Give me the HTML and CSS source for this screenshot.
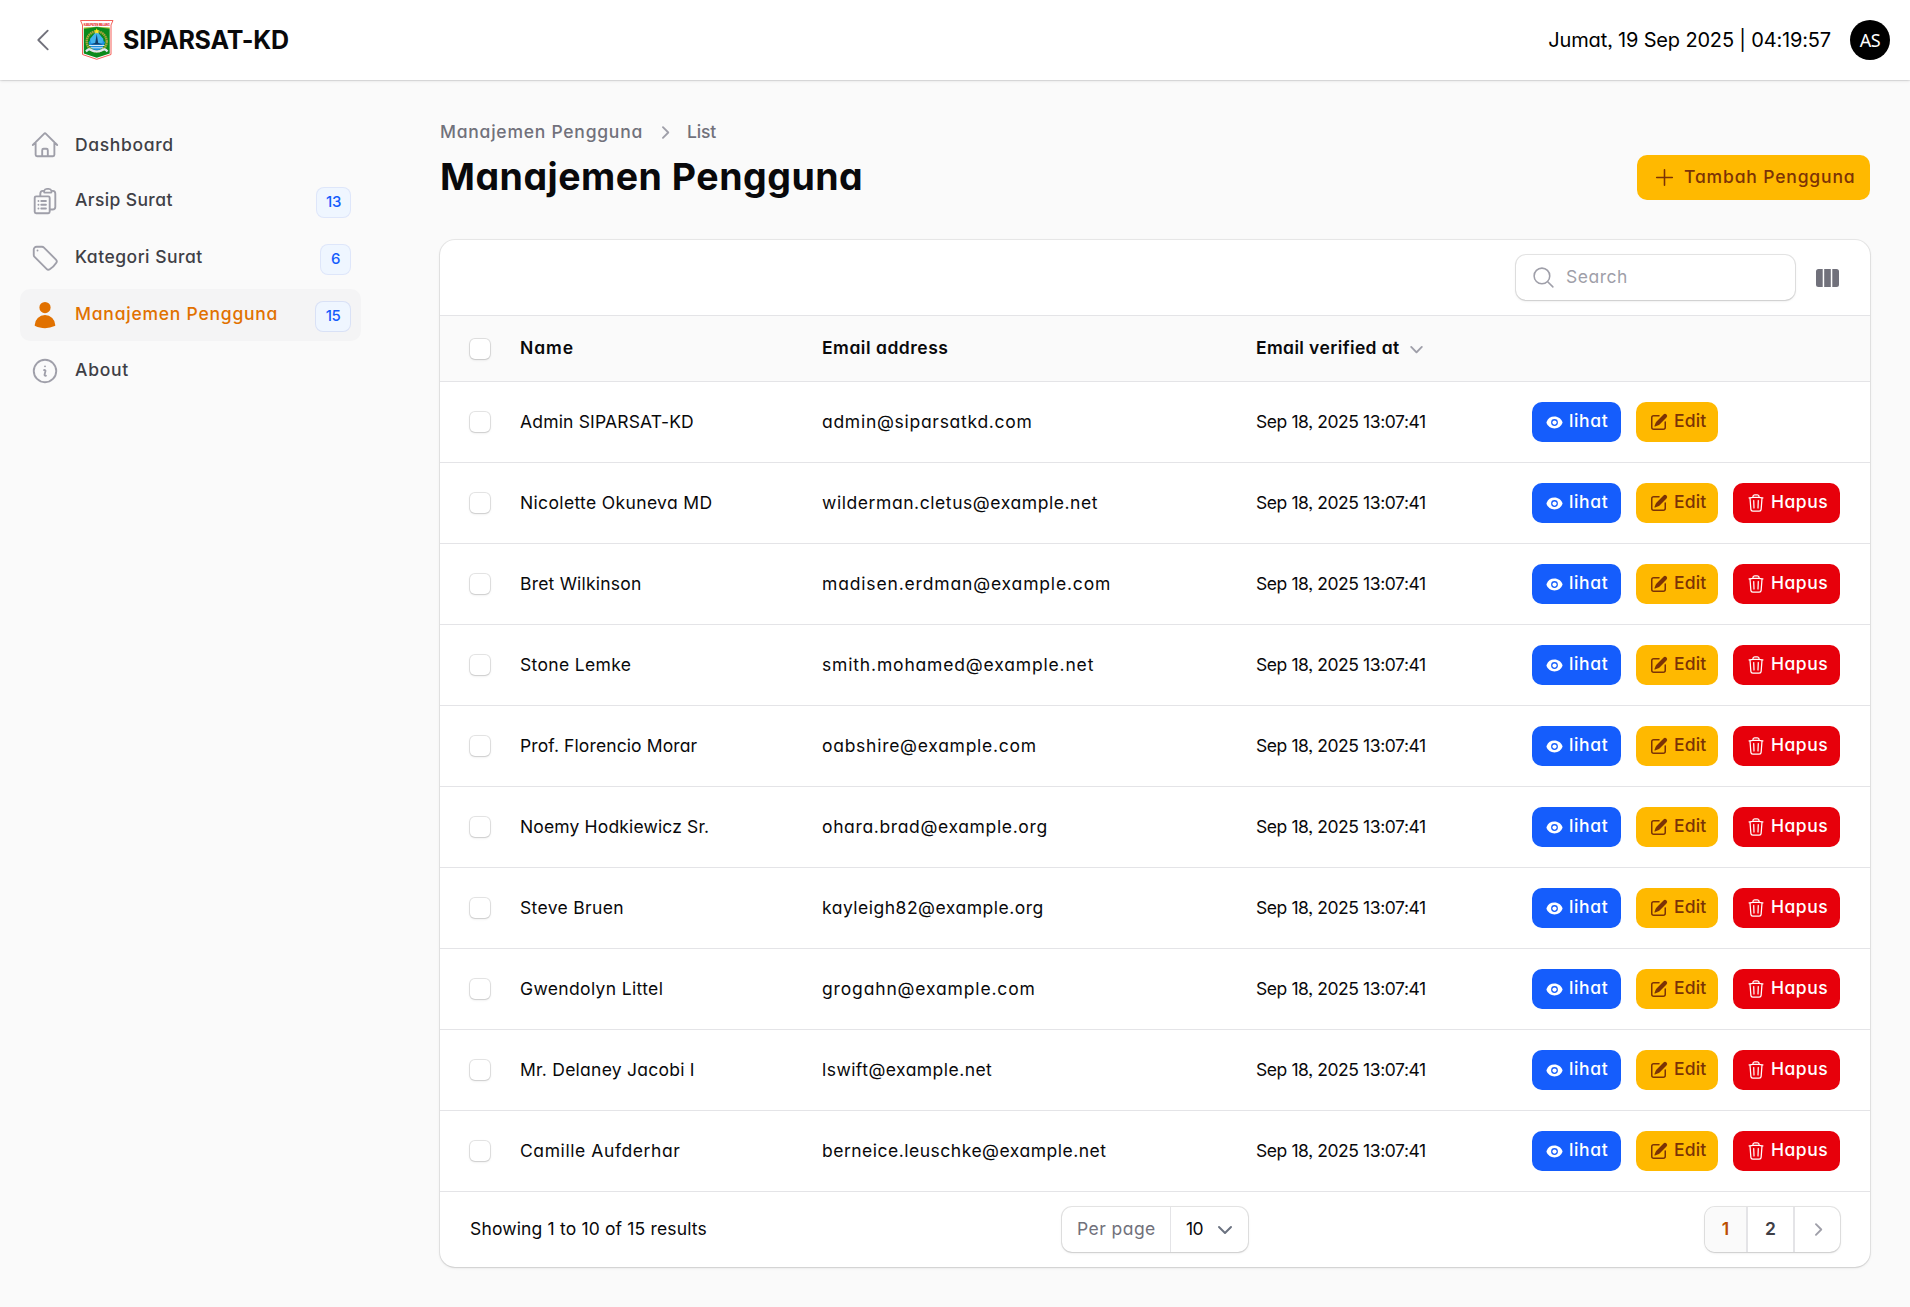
FILE: index.html
```
<!DOCTYPE html>
<html lang="id">
<head>
<meta charset="utf-8">
<title>Manajemen Pengguna - SIPARSAT-KD</title>
<link rel="stylesheet" href="styles.css">
</head>
<body>
<svg class="sprite" width="0" height="0" aria-hidden="true">
  <symbol id="eye" viewBox="0 0 20 20"><path d="M10 12.5a2.5 2.5 0 1 0 0-5 2.5 2.5 0 0 0 0 5Z"/><path fill-rule="evenodd" d="M.664 10.59a1.651 1.651 0 0 1 0-1.186A10.004 10.004 0 0 1 10 3c4.257 0 7.893 2.66 9.336 6.41.147.381.146.804 0 1.186A10.004 10.004 0 0 1 10 17c-4.257 0-7.893-2.66-9.336-6.41ZM14 10a4 4 0 1 1-8 0 4 4 0 0 1 8 0Z"/></symbol>
  <symbol id="pencil" viewBox="0 0 20 20"><path d="m5.433 13.917 1.262-3.155A4 4 0 0 1 7.58 9.42l6.92-6.918a2.121 2.121 0 0 1 3 3l-6.92 6.918c-.383.383-.84.685-1.343.886l-3.154 1.262a.5.5 0 0 1-.65-.65Z"/><path d="M3.5 5.75c0-.69.56-1.25 1.25-1.25H10A.75.75 0 0 0 10 3H4.75A2.75 2.75 0 0 0 2 5.75v9.5A2.75 2.75 0 0 0 4.75 18h9.5A2.75 2.75 0 0 0 17 15.25V10a.75.75 0 0 0-1.5 0v5.25c0 .69-.56 1.25-1.25 1.25h-9.5c-.69 0-1.25-.56-1.25-1.25v-9.5Z"/></symbol>
  <symbol id="trash" viewBox="0 0 24 24"><path fill="none" stroke="currentColor" stroke-width="1.5" stroke-linecap="round" stroke-linejoin="round" d="m14.74 9-.346 9m-4.788 0L9.26 9m9.968-3.21c.342.052.682.107 1.022.166m-1.022-.165L18.16 19.673a2.25 2.25 0 0 1-2.244 2.077H8.084a2.25 2.25 0 0 1-2.244-2.077L4.772 5.79m14.456 0a48.108 48.108 0 0 0-3.478-.397m-12 .562c.34-.059.68-.114 1.022-.165m0 0a48.11 48.11 0 0 1 3.478-.397m7.5 0v-.916c0-1.18-.91-2.164-2.09-2.201a51.964 51.964 0 0 0-3.32 0c-1.18.037-2.09 1.022-2.09 2.201v.916m7.5 0a48.667 48.667 0 0 0-7.5 0"/></symbol>
  <symbol id="chev-right" viewBox="0 0 20 20"><path fill-rule="evenodd" d="M8.22 5.22a.75.75 0 0 1 1.06 0l4.25 4.25a.75.75 0 0 1 0 1.06l-4.25 4.25a.75.75 0 0 1-1.06-1.06L11.94 10 8.22 6.28a.75.75 0 0 1 0-1.06Z"/></symbol>
  <symbol id="chev-down" viewBox="0 0 20 20"><path fill-rule="evenodd" d="M5.22 8.22a.75.75 0 0 1 1.06 0L10 11.94l3.72-3.72a.75.75 0 1 1 1.06 1.06l-4.25 4.25a.75.75 0 0 1-1.06 0L5.22 9.28a.75.75 0 0 1 0-1.06Z"/></symbol>
</svg>

<header class="topbar">
  <svg class="collapse line" viewBox="0 0 24 24"><path d="M15.75 19.5 8.25 12l7.5-7.5"/></svg>
  <svg class="crest" viewBox="0 0 34 40">
    <path d="M.5.5h32.500L31 5v29.500L16.700 39.300 2.500 34.500V5Z" fill="#fff" stroke="#f4605a"/>
    <text x="16.700" y="5.600" font-size="3.400" font-weight="800" text-anchor="middle" textLength="26" lengthAdjust="spacingAndGlyphs" fill="#e8211b">KABUPATEN MALANG</text>
    <path d="M3.800 7.800 16.700 6.800 29.700 7.800V33.500L16.700 37.700 3.800 33.500Z" fill="#0b8a1c"/>
    <path d="M4 7.500h26v1L16.700 7.600 4 8.500Z" fill="#f4e04a"/>
    <circle cx="16.700" cy="21.500" r="10" fill="none" stroke="#a9a43c" stroke-width="2.400" stroke-dasharray="1.600 .5"/>
    <path d="M16.700 11 25 22.500q-2 7-8.300 8Q10.500 29.500 8.500 22.500Z" fill="#1d8fe0"/>
    <path d="M10 19 16.700 11l6.700 8-1 4H11Z" fill="#42b4ee"/>
    <path d="m16.700 14 1.500 9 4.500 1.500h-12l4.500-1.500Z" fill="#123c66"/>
    <path d="M9 25.500h15.500M10.500 27.800h12.500" stroke="#e8f4fc" stroke-width=".9"/>
    <path d="M6 31.500q3-3.500 5-1.500 5.700 3 11.500 0 2-2 5 1.500" fill="none" stroke="#dfe5ee" stroke-width="2.200"/>
    <path d="m16.700 8.300.8 2 2 .1-1.500 1.400.5 2-1.800-1.100-1.800 1.100.5-2-1.500-1.400 2-.1Z" fill="#ffe626"/>
  </svg>
  <span class="brand">SIPARSAT-KD</span>
  <span class="clock">Jumat, 19 Sep 2025 | 04:19:57</span>
  <span class="avatar">AS</span>
</header>

<div class="layout">
  <nav class="sidebar">
    <a class="item"><svg class="line" viewBox="0 0 24 24"><path d="m2.250 12 8.954-8.955c.44-.439 1.152-.439 1.591 0L21.750 12M4.500 9.750v10.125c0 .621.504 1.125 1.125 1.125H9.750v-4.875c0-.621.504-1.125 1.125-1.125h2.250c.621 0 1.125.504 1.125 1.125V21h4.125c.621 0 1.125-.504 1.125-1.125V9.750M8.250 21h8.250"/></svg><span class="label l1">Dashboard</span></a>
    <a class="item tall"><svg class="line" viewBox="0 0 24 24"><path d="M9 12h3.75M9 15h3.75M9 18h3.75m3 .75H18a2.25 2.25 0 0 0 2.25-2.25V6.108c0-1.135-.845-2.098-1.976-2.192a48.424 48.424 0 0 0-1.123-.08m-5.801 0c-.065.21-.1.433-.1.664 0 .414.336.75.75.75h4.5a.75.75 0 0 0 .75-.75 2.25 2.25 0 0 0-.1-.664m-5.8 0A2.251 2.251 0 0 1 13.5 2.25H15c1.012 0 1.867.668 2.15 1.586m-5.8 0c-.376.023-.75.05-1.124.08C9.095 4.01 8.25 4.973 8.25 6.108V8.25m0 0H4.875c-.621 0-1.125.504-1.125 1.125v11.25c0 .621.504 1.125 1.125 1.125h9.75c.621 0 1.125-.504 1.125-1.125V9.375c0-.621-.504-1.125-1.125-1.125H8.25ZM6.75 12h.008v.008H6.75V12Zm0 3h.008v.008H6.75V15Zm0 3h.008v.008H6.75V18Z"/></svg><span class="label l2">Arsip Surat</span><span class="badge">13</span></a>
    <a class="item tall"><svg class="line" viewBox="0 0 24 24"><path d="M9.568 3H5.25A2.25 2.25 0 0 0 3 5.25v4.318c0 .597.237 1.17.659 1.591l9.581 9.581c.699.699 1.78.872 2.607.33a18.095 18.095 0 0 0 5.223-5.223c.542-.827.369-1.908-.33-2.607L11.16 3.66A2.25 2.25 0 0 0 9.568 3Z"/><path d="M6 6h.008v.008H6V6Z"/></svg><span class="label l3">Kategori Surat</span><span class="badge one">6</span></a>
    <a class="item tall active"><svg viewBox="0 0 24 24"><path fill-rule="evenodd" d="M7.5 6a4.5 4.5 0 1 1 9 0 4.5 4.5 0 0 1-9 0ZM3.751 20.105a8.25 8.25 0 0 1 16.498 0 .75.75 0 0 1-.437.695A18.683 18.683 0 0 1 12 22.5c-2.786 0-5.433-.608-7.812-1.7a.75.75 0 0 1-.437-.695Z"/></svg><span class="label l4">Manajemen Pengguna</span><span class="badge wide">15</span></a>
    <a class="item"><svg class="line" viewBox="0 0 24 24"><path d="m11.25 11.25.041-.02a.75.75 0 0 1 1.063.852l-.708 2.836a.75.75 0 0 0 1.063.853l.041-.021M21 12a9 9 0 1 1-18 0 9 9 0 0 1 18 0Zm-9-3.75h.008v.008H12V8.25Z"/></svg><span class="label l5">About</span></a>
  </nav>

  <main>
    <div class="crumbs"><span class="c1">Manajemen Pengguna</span><svg viewBox="0 0 20 20"><use href="#chev-right"/></svg><span class="c2">List</span></div>
    <div class="heading">
      <h1>Manajemen Pengguna</h1>
      <button class="create"><svg class="line" viewBox="0 0 24 24"><path d="M12 4.500v15m7.500-7.500h-15"/></svg><span>Tambah Pengguna</span></button>
    </div>

    <section class="card">
      <div class="toolbar">
        <div class="search"><svg class="line" viewBox="0 0 24 24"><path d="m21 21-5.197-5.197m0 0A7.500 7.500 0 1 0 5.196 5.196a7.500 7.500 0 0 0 10.607 10.607Z"/></svg><span>Search</span></div>
        <svg class="cols" viewBox="0 0 23 18"><path d="M2.500 0H6.700V18H2.500A2.500 2.500 0 0 1 0 15.500v-13A2.500 2.500 0 0 1 2.500 0ZM8.200 0h6.600v18H8.200ZM16.300 0h4.200A2.500 2.500 0 0 1 23 2.500v13a2.500 2.500 0 0 1-2.500 2.500h-4.200Z"/></svg>
      </div>
      <div class="row thead"><i class="check"></i><span class="h1c">Name</span><span class="h2c">Email address</span><span class="h3c">Email verified at<svg viewBox="0 0 20 20"><use href="#chev-down"/></svg></span></div>
      <div class="rows">
        <div class="row"><i class="check"></i><span class="name">Admin SIPARSAT-KD</span><span class="mail">admin@siparsatkd.com</span><span class="date">Sep 18, 2025 13:07:41</span><div class="actions"><button class="btn view"><svg><use href="#eye"/></svg><span>lihat</span></button><button class="btn edit"><svg><use href="#pencil"/></svg><span>Edit</span></button></div></div>
        <div class="row"><i class="check"></i><span class="name">Nicolette Okuneva MD</span><span class="mail">wilderman.cletus@example.net</span><span class="date">Sep 18, 2025 13:07:41</span><div class="actions"><button class="btn view"><svg><use href="#eye"/></svg><span>lihat</span></button><button class="btn edit"><svg><use href="#pencil"/></svg><span>Edit</span></button><button class="btn del"><svg><use href="#trash"/></svg><span>Hapus</span></button></div></div>
        <div class="row"><i class="check"></i><span class="name">Bret Wilkinson</span><span class="mail">madisen.erdman@example.com</span><span class="date">Sep 18, 2025 13:07:41</span><div class="actions"><button class="btn view"><svg><use href="#eye"/></svg><span>lihat</span></button><button class="btn edit"><svg><use href="#pencil"/></svg><span>Edit</span></button><button class="btn del"><svg><use href="#trash"/></svg><span>Hapus</span></button></div></div>
        <div class="row"><i class="check"></i><span class="name">Stone Lemke</span><span class="mail">smith.mohamed@example.net</span><span class="date">Sep 18, 2025 13:07:41</span><div class="actions"><button class="btn view"><svg><use href="#eye"/></svg><span>lihat</span></button><button class="btn edit"><svg><use href="#pencil"/></svg><span>Edit</span></button><button class="btn del"><svg><use href="#trash"/></svg><span>Hapus</span></button></div></div>
        <div class="row"><i class="check"></i><span class="name">Prof. Florencio Morar</span><span class="mail">oabshire@example.com</span><span class="date">Sep 18, 2025 13:07:41</span><div class="actions"><button class="btn view"><svg><use href="#eye"/></svg><span>lihat</span></button><button class="btn edit"><svg><use href="#pencil"/></svg><span>Edit</span></button><button class="btn del"><svg><use href="#trash"/></svg><span>Hapus</span></button></div></div>
        <div class="row"><i class="check"></i><span class="name">Noemy Hodkiewicz Sr.</span><span class="mail">ohara.brad@example.org</span><span class="date">Sep 18, 2025 13:07:41</span><div class="actions"><button class="btn view"><svg><use href="#eye"/></svg><span>lihat</span></button><button class="btn edit"><svg><use href="#pencil"/></svg><span>Edit</span></button><button class="btn del"><svg><use href="#trash"/></svg><span>Hapus</span></button></div></div>
        <div class="row"><i class="check"></i><span class="name">Steve Bruen</span><span class="mail">kayleigh82@example.org</span><span class="date">Sep 18, 2025 13:07:41</span><div class="actions"><button class="btn view"><svg><use href="#eye"/></svg><span>lihat</span></button><button class="btn edit"><svg><use href="#pencil"/></svg><span>Edit</span></button><button class="btn del"><svg><use href="#trash"/></svg><span>Hapus</span></button></div></div>
        <div class="row"><i class="check"></i><span class="name">Gwendolyn Littel</span><span class="mail">grogahn@example.com</span><span class="date">Sep 18, 2025 13:07:41</span><div class="actions"><button class="btn view"><svg><use href="#eye"/></svg><span>lihat</span></button><button class="btn edit"><svg><use href="#pencil"/></svg><span>Edit</span></button><button class="btn del"><svg><use href="#trash"/></svg><span>Hapus</span></button></div></div>
        <div class="row"><i class="check"></i><span class="name">Mr. Delaney Jacobi I</span><span class="mail">lswift@example.net</span><span class="date">Sep 18, 2025 13:07:41</span><div class="actions"><button class="btn view"><svg><use href="#eye"/></svg><span>lihat</span></button><button class="btn edit"><svg><use href="#pencil"/></svg><span>Edit</span></button><button class="btn del"><svg><use href="#trash"/></svg><span>Hapus</span></button></div></div>
        <div class="row"><i class="check"></i><span class="name">Camille Aufderhar</span><span class="mail">berneice.leuschke@example.net</span><span class="date">Sep 18, 2025 13:07:41</span><div class="actions"><button class="btn view"><svg><use href="#eye"/></svg><span>lihat</span></button><button class="btn edit"><svg><use href="#pencil"/></svg><span>Edit</span></button><button class="btn del"><svg><use href="#trash"/></svg><span>Hapus</span></button></div></div>
      </div>
      <div class="footer">
        <span class="showing">Showing 1 to 10 of 15 results</span>
        <div class="perpage"><span class="pp">Per page</span><span class="sel"><span>10</span><svg viewBox="0 0 20 20"><path d="m6 8 4 4 4-4"/></svg></span></div>
        <div class="pages"><span class="current">1</span><span class="second">2</span><span class="next"><svg viewBox="0 0 20 20"><use href="#chev-right"/></svg></span></div>
      </div>
    </section>
  </main>
</div>
</body>
</html>
```
FILE: styles.css
```
* { box-sizing: border-box; }

body {
  margin: 0;
  min-height: 1307px;
  background: #fafafa;
  color: #09090b;
  font-family: Inter, "Noto Sans", sans-serif;
  font-size: 17.5px;
  line-height: 25px;
  font-feature-settings: "cv11", "ss03";
  white-space: nowrap;
}

button {
  font: inherit;
  font-feature-settings: inherit;
  border: 0;
}

svg { display: block; flex: none; fill: currentColor; }
.sprite { position: absolute; }
.line {
  fill: none;
  stroke: currentColor;
  stroke-width: 1.5;
  stroke-linecap: round;
  stroke-linejoin: round;
}

/* Top bar */
.topbar {
  display: flex;
  align-items: center;
  height: 80px;
  padding: 0 20px 0 28px;
  background: #fff;
  box-shadow: 0 0 0 1px rgba(9, 9, 11, .05), 0 1px 3px rgba(0, 0, 0, .1), 0 1px 2px -1px rgba(0, 0, 0, .1);
}
.collapse { width: 30px; height: 30px; color: #71717b; }
.crest { width: 34px; height: 40px; margin-left: 22px; overflow: visible; line-height: 1; letter-spacing: 0; }
.brand {
  margin-left: 9px;
  font-size: 25px;
  font-weight: 700;
  letter-spacing: -.2px;
}
.clock {
  margin-left: auto;
  padding-top: 1px;
  font-size: 20px;
  letter-spacing: -.17px;
  color: #000;
}
.avatar {
  display: flex;
  align-items: center;
  justify-content: center;
  width: 40px;
  height: 40px;
  margin-left: 19px;
  border-radius: 50%;
  background: #000;
  color: #fff;
  font-family: "Noto Sans", sans-serif;
  font-size: 18px;
  letter-spacing: -.5px;
}

.layout { display: flex; }

/* Sidebar */
.sidebar {
  display: flex;
  flex-direction: column;
  gap: 5px;
  width: 400px;
  padding: 40px 39px 0 20px;
}
.item {
  display: flex;
  align-items: center;
  height: 50px;
  padding: 0 11px 0 10px;
  border-radius: 10px;
  color: #9f9fa9;
}
.item.tall { height: 52px; }
.item > svg { width: 30px; height: 30px; }
.label {
  flex: 1;
  margin-left: 15px;
  padding-bottom: 4px;
  font-weight: 450;
  color: #3f3f46;
}
.active { background: #f4f4f5; color: #e17100; }
.active .label { color: #e17100; }
.l1 { padding-bottom: 2px; letter-spacing: .65px; }
.l2 { letter-spacing: .38px; }
.l3 { letter-spacing: .5px; }
.l4 { letter-spacing: .77px; }
.l5 { letter-spacing: .72px; }
.badge {
  width: 33px;
  height: 29px;
  margin-top: 2px;
  border-radius: 7px;
  background: #eff6ff;
  box-shadow: 0 0 0 1px rgba(21, 93, 252, .12);
  color: #155dfc;
  font-size: 15px;
  font-weight: 500;
  line-height: 28px;
  letter-spacing: -.4px;
  text-align: center;
}
.badge.one { width: 29px; }
.badge.wide { width: 34px; }

/* Page header */
main { flex: 1; padding: 39px 40px 40px; }
.crumbs {
  display: flex;
  align-items: center;
  height: 25px;
  font-weight: 450;
  color: #71717b;
}
.crumbs svg { width: 25px; height: 25px; margin: 1px 10px 0 9px; color: #9f9fa9; }
.c1 { letter-spacing: .76px; }
.c2 { letter-spacing: -.2px; }
.heading {
  display: flex;
  justify-content: space-between;
  align-items: flex-end;
  height: 46px;
  margin-top: 10px;
}
h1 {
  margin: 0 0 1px 0;
  font-size: 37.5px;
  font-weight: 700;
  line-height: 45px;
  letter-spacing: .5px;
}
.create {
  display: flex;
  align-items: center;
  width: 233px;
  height: 45px;
  padding: 0 0 0 15px;
  border-radius: 10px;
  background: #ffb900;
  color: #7b3306;
  font-weight: 450;
  letter-spacing: .85px;
}
.create svg { width: 25px; height: 25px; margin-right: 7px; }
.create span { padding-bottom: 2px; }

/* Table card */
.card {
  height: 1027px;
  margin-top: 40px;
  border-radius: 15px;
  background: #fff;
  box-shadow: 0 0 0 1px rgba(9, 9, 11, .07), 0 1px 3px rgba(0, 0, 0, .1), 0 1px 2px -1px rgba(0, 0, 0, .1);
}
.toolbar {
  display: flex;
  align-items: center;
  justify-content: flex-end;
  height: 75px;
  padding-right: 31px;
}
.search {
  display: flex;
  align-items: center;
  width: 279px;
  height: 45px;
  padding-left: 15px;
  border-radius: 10px;
  box-shadow: 0 0 0 1px rgba(9, 9, 11, .1), 0 1px 3px rgba(0, 0, 0, .1), 0 1px 2px -1px rgba(0, 0, 0, .1);
  color: #9f9fa9;
}
.search svg { width: 25px; height: 25px; }
.search span { margin-left: 10px; padding-bottom: 2px; letter-spacing: .5px; }
.cols { width: 23px; height: 18px; margin-left: 21px; color: #71717b; }

.row {
  display: grid;
  grid-template-columns: 80px 302px 434px 276px auto;
  align-items: center;
  height: 81px;
  border-top: 1px solid #e4e4e7;
}
.row > span { padding-bottom: 2px; }
.thead {
  height: 66px;
  background: #fafafa;
  font-weight: 600;
}
.check {
  width: 20px;
  height: 20px;
  margin-left: 30px;
  border-radius: 5px;
  background: #fff;
  box-shadow: 0 0 0 1px rgba(9, 9, 11, .1), 0 1px 3px rgba(0, 0, 0, .1), 0 1px 2px -1px rgba(0, 0, 0, .1);
}
.h1c { letter-spacing: .9px; }
.h2c { letter-spacing: .52px; }
.h3c { display: flex; align-items: center; letter-spacing: .38px; }
.h3c svg { width: 25px; height: 25px; margin: 2px 0 0 4px; color: #9f9fa9; }
.date { letter-spacing: -.42px; }

.row:nth-child(1) .name { letter-spacing: .17px; }
.row:nth-child(2) .name { letter-spacing: .35px; }
.row:nth-child(3) .name { letter-spacing: .21px; }
.row:nth-child(4) .name { letter-spacing: .33px; }
.row:nth-child(5) .name { letter-spacing: .11px; }
.row:nth-child(6) .name { letter-spacing: .15px; }
.row:nth-child(7) .name { letter-spacing: .34px; }
.row:nth-child(8) .name { letter-spacing: .35px; }
.row:nth-child(9) .name { letter-spacing: .25px; }
.row:nth-child(10) .name { letter-spacing: .58px; }
.row:nth-child(1) .mail { letter-spacing: .72px; }
.row:nth-child(2) .mail { letter-spacing: .57px; }
.row:nth-child(3) .mail { letter-spacing: .84px; }
.row:nth-child(4) .mail { letter-spacing: .83px; }
.row:nth-child(5) .mail { letter-spacing: .73px; }
.row:nth-child(6) .mail { letter-spacing: .64px; }
.row:nth-child(7) .mail { letter-spacing: .5px; }
.row:nth-child(8) .mail { letter-spacing: .85px; }
.row:nth-child(9) .mail { letter-spacing: .46px; }
.row:nth-child(10) .mail { letter-spacing: .5px; }

.actions { display: flex; gap: 15px; }
.btn {
  display: flex;
  align-items: center;
  height: 40px;
  padding: 0 0 0 13px;
  border-radius: 10px;
  font-weight: 500;
}
.btn svg { width: 20px; height: 20px; }
.btn span { margin-left: 5px; padding-bottom: 3px; }
.view { width: 89px; background: #155dfc; color: #fff; letter-spacing: .65px; }
.view svg { width: 17px; height: 17px; margin: 0 1px 0 1px; }
.edit { width: 82px; background: #ffb900; color: #7b3306; letter-spacing: .15px; }
.del { width: 107px; background: #e7000b; color: #fff; letter-spacing: .5px; }

/* Footer */
.footer {
  display: grid;
  grid-template-columns: 1fr auto 1fr;
  align-items: center;
  height: 76px;
  padding: 0 30px;
  border-top: 1px solid #e4e4e7;
}
.showing { padding-bottom: 2px; letter-spacing: .16px; }
.perpage, .pages {
  display: flex;
  height: 45px;
  border-radius: 10px;
  overflow: hidden;
  box-shadow: 0 0 0 1px rgba(9, 9, 11, .1), 0 1px 3px rgba(0, 0, 0, .1), 0 1px 2px -1px rgba(0, 0, 0, .1);
}
.perpage { width: 186px; line-height: 43px; }
.pp {
  width: 109px;
  padding-left: 15px;
  border-right: 1px solid #e4e4e7;
  color: #71717b;
  letter-spacing: .45px;
}
.sel { display: flex; align-items: center; padding: 0 0 0 15px; letter-spacing: -.6px; }
.sel > span { align-self: flex-start; }
.sel svg {
  width: 30px;
  height: 30px;
  margin-left: 7px;
  fill: none;
  stroke: #6b7280;
  stroke-width: 1.3;
  stroke-linecap: round;
  stroke-linejoin: round;
}
.pages { justify-self: end; line-height: 43px; font-weight: 600; text-align: center; }
.pages span + span { border-left: 2px solid #e4e4e7; }
.current { width: 41px; background: #fafafa; color: #bb4d00; }
.second { width: 47px; color: #3f3f46; }
.next { display: flex; align-items: center; justify-content: center; width: 47px; color: #9f9fa9; }
.next svg { width: 25px; height: 25px; }
```
